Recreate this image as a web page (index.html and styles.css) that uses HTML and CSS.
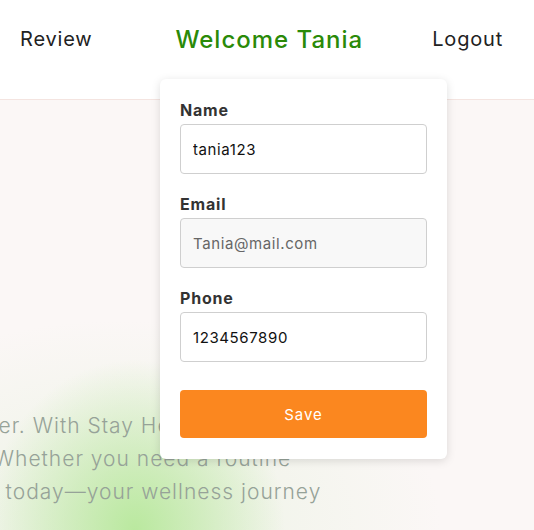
FILE: index.html
```html
<!DOCTYPE html>
<html lang="en">
<head>
<meta charset="utf-8">
<title>Profile</title>
<link rel="stylesheet" href="styles.css">
</head>
<body>
<header class="topbar">
  <nav class="nav">
    <a class="nav-link" href="#">Review</a>
    <span class="welcome">Welcome Tania</span>
    <a class="nav-link logout" href="#">Logout</a>
  </nav>
  <form class="profile-card">
    <div class="field">
      <label class="field-label">Name</label>
      <input class="field-input" type="text" value="tania123">
    </div>
    <div class="field">
      <label class="field-label">Email</label>
      <input class="field-input readonly" type="text" value="Tania@mail.com" readonly>
    </div>
    <div class="field">
      <label class="field-label">Phone</label>
      <input class="field-input" type="text" value="1234567890">
    </div>
    <button class="save-btn" type="button">Save</button>
  </form>
</header>
<main class="hero">
  <div class="hero-text">
    <span class="line">better. With Stay Healthy, you'll be</span>
    <span class="line">Whether you need a routine</span>
    <span class="line">Act today—your wellness journey</span>
  </div>
</main>
</body>
</html>
```
FILE: styles.css
```css
* { box-sizing: border-box; }
html, body { margin: 0; padding: 0; }
body {
  font-family: Inter, "Open Sans", sans-serif;
  background: #fbf7f6;
  width: 534px;
  height: 530px;
  overflow: hidden;
}
.topbar {
  position: relative;
  background: #fff;
  height: 100px;
  border-bottom: 1px solid #f4e4e0;
  z-index: 2;
}
.nav {
  display: flex;
  align-items: center;
  height: 78px;
  padding: 0 31px 0 20px;
}
.nav-link {
  color: #222;
  text-decoration: none;
  font-size: 20px;
  font-weight: 400;
  letter-spacing: 0.8px;
}
.welcome {
  color: #2a8a08;
  font-size: 24px;
  font-weight: 500;
  letter-spacing: 1px;
  margin-left: 83px;
}
.logout { margin-left: auto; }
.profile-card {
  position: absolute;
  left: 160px;
  top: 79px;
  width: 287px;
  background: #fff;
  border-radius: 6px;
  box-shadow: 0 2px 10px rgba(0,0,0,0.13);
  padding: 20px 20px 21px;
  display: flex;
  flex-direction: column;
}
.field {
  display: flex;
  flex-direction: column;
  margin-bottom: 19px;
}
.field-label {
  font-size: 16px;
  font-weight: 700;
  color: #333;
  line-height: 22px;
  letter-spacing: 0.8px;
  margin-bottom: 3px;
}
.field-input {
  height: 50px;
  border: 1px solid #cfcfcf;
  border-radius: 4px;
  padding: 0 12px;
  font-family: inherit;
  font-size: 15px;
  letter-spacing: 0.6px;
  color: #111;
  background: #fff;
  outline: none;
}
.field-input.readonly {
  background: #f8f8f8;
  color: #666;
}
.save-btn {
  margin-top: 9px;
  height: 48px;
  border: none;
  border-radius: 4px;
  background: #fb871f;
  color: #fff;
  font-family: inherit;
  font-size: 15px;
  font-weight: 400;
  letter-spacing: 1px;
}
.hero {
  height: 430px;
  background:
    radial-gradient(ellipse 150px 170px at 135px 430px, rgba(183,232,155,0.95) 0%, rgba(190,232,165,0.6) 45%, rgba(220,240,205,0) 100%),
    radial-gradient(ellipse 320px 200px at 120px 420px, rgba(225,240,215,0.6) 0%, rgba(240,245,235,0) 100%),
    #fbf7f6;
  padding-top: 309px;
}
.hero-text {
  width: 885px;
  margin-left: -300px;
  text-align: center;
  color: #96a298;
  font-size: 21px;
  font-weight: 300;
  line-height: 33px;
  letter-spacing: 1px;
}
.line { display: block; white-space: nowrap; }
```
